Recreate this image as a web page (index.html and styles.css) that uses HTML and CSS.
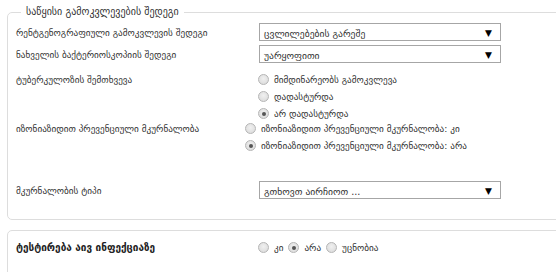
FILE: index.html
```html
<!DOCTYPE html>
<html lang="ka">
<head>
<meta charset="utf-8">
<link rel="stylesheet" href="styles.css">
</head>
<body>
<fieldset class="panel">
  <legend class="panel-title">საწყისი გამოკვლევების შედეგი</legend>
  <div class="row row-select">
    <div class="label">რენტგენოგრაფიული გამოკვლევის შედეგი</div>
    <div class="select"><span class="select-text">ცვლილებების გარეშე</span><span class="caret">▼</span></div>
  </div>
  <div class="row row-select">
    <div class="label">ნახველის ბაქტერიოსკოპიის შედეგი</div>
    <div class="select"><span class="select-text">უარყოფითი</span><span class="caret">▼</span></div>
  </div>
  <div class="row row-radios row-tub">
    <div class="label">ტუბერკულოზის შემთხვევა</div>
    <div class="radio-list">
      <label class="radio"><span class="dot"></span>მიმდინარეობს გამოკვლევა</label>
      <label class="radio"><span class="dot"></span>დადასტურდა</label>
      <label class="radio"><span class="dot on"></span>არ დადასტურდა</label>
    </div>
  </div>
  <div class="row row-radios row-iso">
    <div class="label">იზონიაზიდით პრევენციული მკურნალობა</div>
    <div class="radio-list">
      <label class="radio"><span class="dot"></span>იზონიაზიდით პრევენციული მკურნალობა: კი</label>
      <label class="radio"><span class="dot on"></span>იზონიაზიდით პრევენციული მკურნალობა: არა</label>
    </div>
  </div>
  <div class="row row-select row-type">
    <div class="label">მკურნალობის ტიპი</div>
    <div class="select"><span class="select-text">გთხოვთ აირჩიოთ ...</span><span class="caret">▼</span></div>
  </div>
</fieldset>
<fieldset class="panel panel-second">
  <div class="row row-test">
    <div class="label strong">ტესტირება აივ ინფექციაზე</div>
    <div class="radio-inline">
      <label class="radio"><span class="dot"></span>კი</label>
      <label class="radio"><span class="dot on"></span>არა</label>
      <label class="radio"><span class="dot"></span>უცნობია</label>
    </div>
  </div>
</fieldset>
</body>
</html>
```
FILE: styles.css
```css
html, body {
  margin: 0;
  padding: 0;
  background: #fff;
  overflow: hidden;
}
body {
  width: 556px;
  height: 272px;
  padding: 5px 0 0 7px;
  box-sizing: border-box;
  font-family: "DejaVu Sans", "Noto Sans", sans-serif;
  font-size: 9.2px;
  color: #333;
}
.panel {
  width: 600px;
  box-sizing: border-box;
  margin: 0;
  padding: 2px 8px 18px 8px;
  border: 1px solid #ddd;
  border-radius: 5px;
}
.panel-title {
  margin-left: 5px;
  padding: 0 5px;
  line-height: 14px;
  font-size: 10px;
  color: #333;
}
.row {
  display: grid;
  grid-template-columns: 243px 1fr;
  align-items: center;
}
.row-select {
  height: 22px;
}
.label {
  white-space: nowrap;
}
.select {
  width: 242px;
  height: 18px;
  box-sizing: border-box;
  border: 1px solid #a6a6a6;
  display: flex;
  align-items: center;
  justify-content: space-between;
  padding: 2px 8px 0 4px;
  background: #fff;
  font-size: 9.6px;
}
.caret {
  font-size: 9px;
  color: #000;
}
.row-radios {
  align-items: start;
}
.row-radios .label {
  line-height: 17px;
}
.radio-list {
  display: flex;
  flex-direction: column;
}
.radio {
  display: flex;
  align-items: center;
  height: 17px;
  white-space: nowrap;
}
.row-tub {
  margin-top: 6px;
  grid-template-columns: 242px 1fr;
}
.row-iso {
  margin-top: -2px;
  grid-template-columns: 229px 1fr;
}
.dot {
  width: 11px;
  height: 11px;
  box-sizing: border-box;
  border-radius: 50%;
  border: 1px solid #b5b5b5;
  background: radial-gradient(circle at 50% 40%, #f0f0f0, #d8d8d8);
  margin-right: 5px;
  position: relative;
  flex: none;
}
.dot.on::after {
  content: "";
  position: absolute;
  left: 2.5px;
  top: 2.5px;
  width: 4px;
  height: 4px;
  border-radius: 50%;
  background: #555;
}
.row-type {
  margin-top: 25px;
}
.panel-second {
  margin-top: 10px;
  padding: 8px 8px 20px 8px;
}
.strong {
  font-weight: bold;
  font-size: 10px;
  color: #222;
}
.radio-inline {
  display: flex;
  gap: 5px;
}
.row-test {
  grid-template-columns: 242px 1fr;
}
```
